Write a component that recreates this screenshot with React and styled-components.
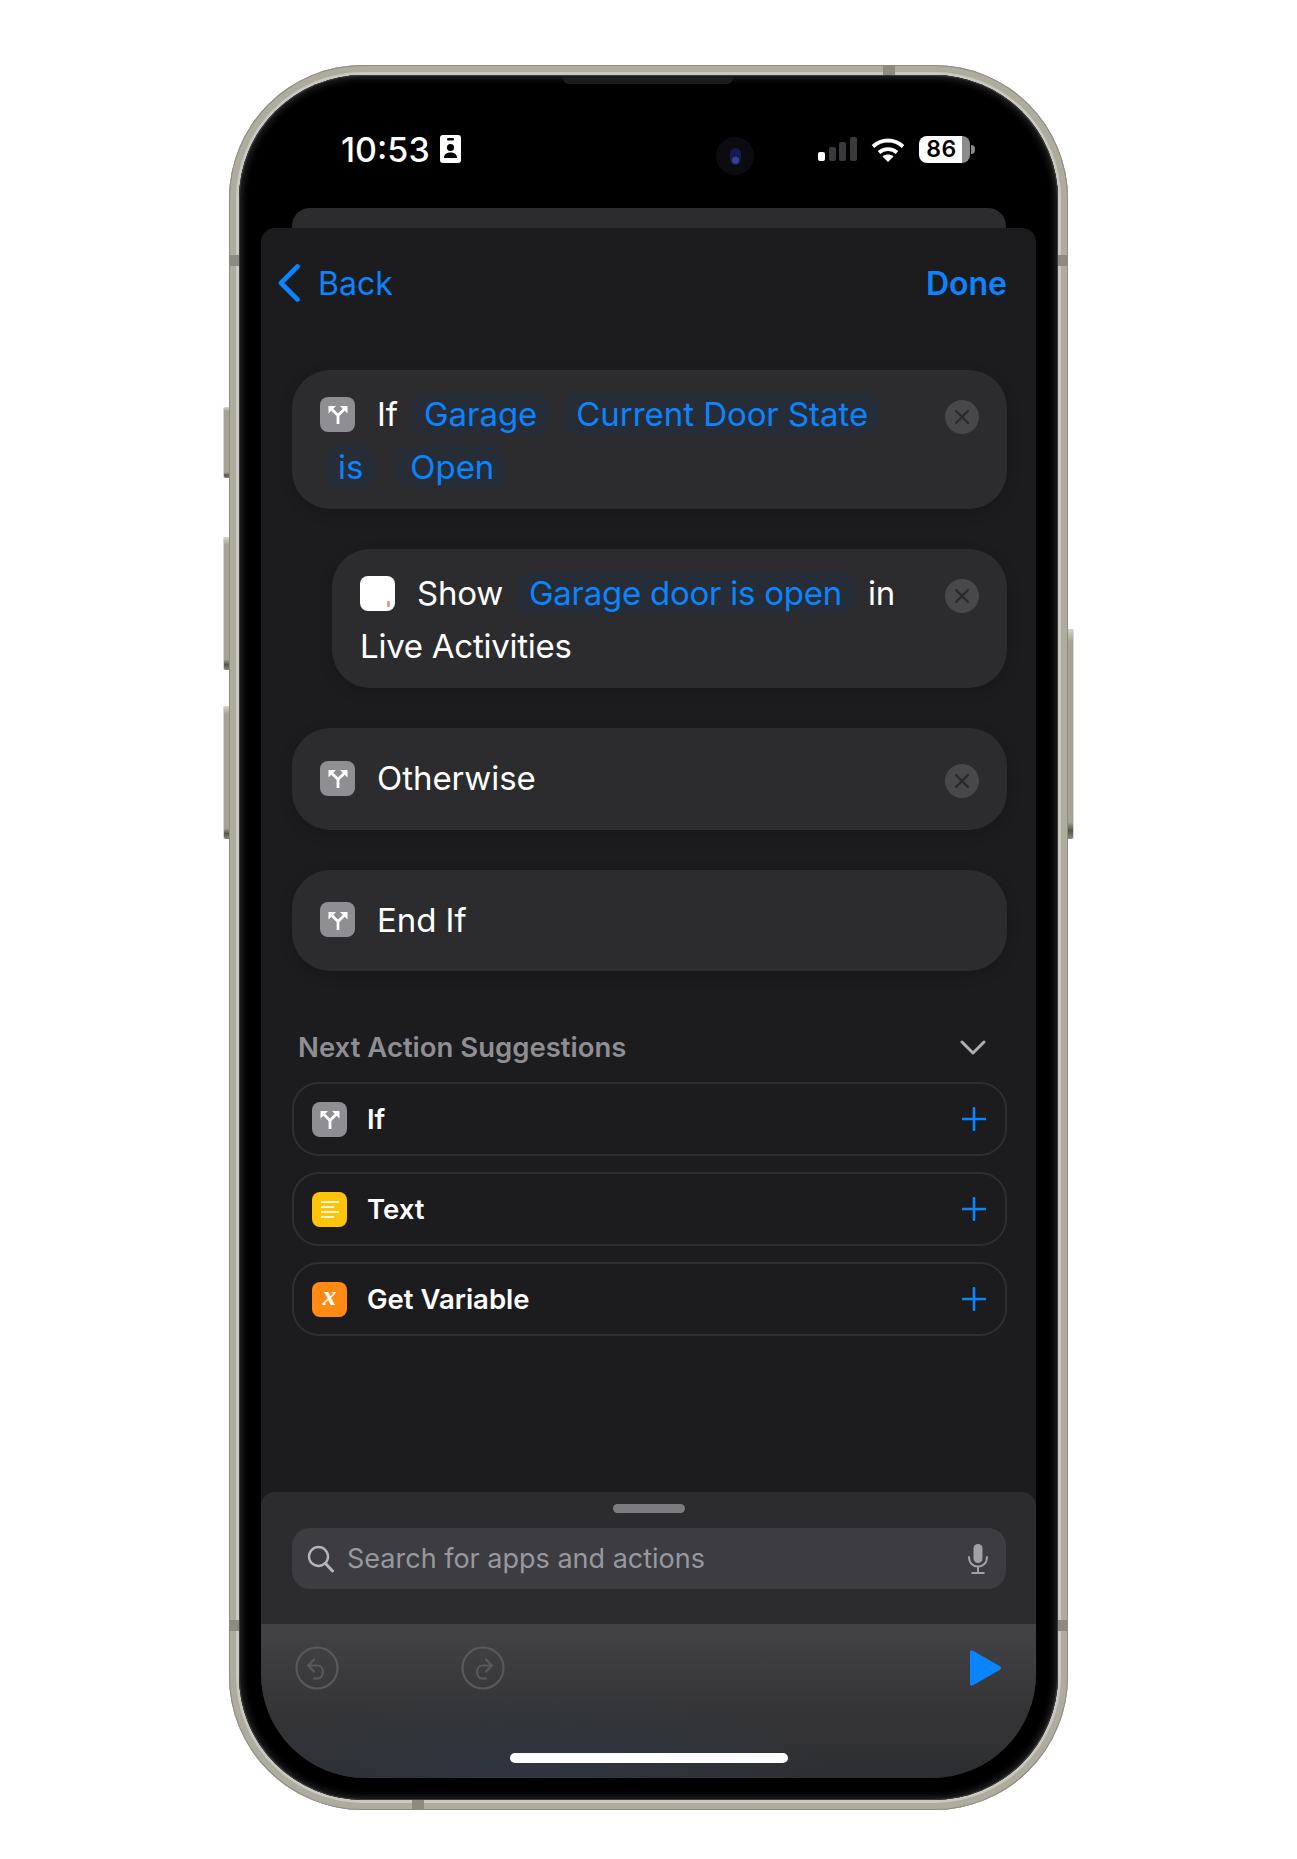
import React from "react"
import styled, { createGlobalStyle } from "styled-components"

const blue = "#0a84ff"

const GlobalStyle = createGlobalStyle`
  html, body {
    margin: 0;
    background: #fff;
    font-family: Inter, "Noto Sans", sans-serif;
    -webkit-font-smoothing: antialiased;
  }
`

const Stage = styled.div`
  display: flex;
  justify-content: center;
  height: 1859px;
  padding-top: 65px;
  box-sizing: border-box;
`
const Phone = styled.div`
  position: relative;
  display: flex;
  width: 839px;
  height: 1745px;
  padding: 10px;
  box-sizing: border-box;
  border-radius: 134px;
  background: linear-gradient(90deg, #a9a799 0%, #b5b3a6 50%, #a9a799 100%);
  box-shadow: inset 0 0 0 1px #8f8d80, inset 0 0 0 7px #aeac9f, inset 0 0 0 10px #c9c9c0;
`
const SideButton = styled.span`
  position: absolute;
  top: ${p => p.$top}px;
  height: ${p => p.$height}px;
  width: 6px;
  box-sizing: border-box;
  ${p => (p.$right ? "right: -6px; border-right: 1px solid #d8d8d2;" : "left: -6px; border-left: 1px solid #d8d8d2;")}
  background: linear-gradient(180deg, #d4d3ca 0%, #a5a395 6%, #a5a395 92%, #55544c 96%, #8b8a7e 100%);
  border-radius: ${p => (p.$right ? "0 2px 2px 0" : "2px 0 0 2px")};
`
const AntennaV = styled.span`
  position: absolute;
  top: ${p => p.$top}px;
  ${p => (p.$right ? "right: 0;" : "left: 0;")}
  width: 10px;
  height: 11px;
  background: #8d8b80;
`
const AntennaH = styled.span`
  position: absolute;
  left: ${p => p.$left}px;
  ${p => (p.$bottom ? "bottom: 0;" : "top: 0;")}
  width: 12px;
  height: 10px;
  background: #8d8b80;
`
const Screen = styled.div`
  position: relative;
  flex: 1;
  display: flex;
  flex-direction: column;
  padding: 0 22px 22px;
  border-radius: 124px;
  background: #000;
  box-shadow: inset 0 0 0 1px #3a3a3a, inset 0 0 7px 3px #262626;
`
const Speaker = styled.span`
  position: absolute;
  top: 2px;
  left: 324px;
  width: 170px;
  height: 7px;
  border-radius: 0 0 6px 6px;
  background: #1c1c1c;
`
const Camera = styled.span`
  position: absolute;
  top: 62px;
  left: 477px;
  width: 38px;
  height: 38px;
  display: flex;
  align-items: center;
  justify-content: center;
  border-radius: 50%;
  background: #0b0b10;
`
const Lens = styled.span`
  width: 11px;
  height: 17px;
  border-radius: 6px;
  background: radial-gradient(circle at 50% 72%, #3b3f9a 0 3px, #141c50 4px, #141c50 100%);
`
const StatusBar = styled.div`
  height: 133px;
  display: flex;
  align-items: flex-start;
  padding: 57px 66px 0 80px;
  box-sizing: border-box;
`
const Clock = styled.div`
  display: flex;
  align-items: center;
  gap: 10px;
  height: 34px;
  color: #fff;
  font-size: 34px;
  font-weight: 500;
`
const StatusRight = styled.div`
  margin-left: auto;
  display: flex;
  align-items: center;
  height: 34px;
  gap: 14px;
`
const Battery = styled.div`
  position: relative;
  display: flex;
  align-items: center;
  justify-content: center;
  width: 51px;
  height: 27px;
  border-radius: 8px;
  background: linear-gradient(90deg, #fff 0 84%, #8b8b8b 84% 100%);
  color: #000;
  font-size: 23px;
  font-weight: 600;
  letter-spacing: 0.6px;
  padding-right: 6px;
  box-sizing: border-box;
  &::after {
    content: "";
    position: absolute;
    right: -5px;
    top: 9px;
    width: 4px;
    height: 9px;
    border-radius: 0 4px 4px 0;
    background: #8b8b8b;
  }
`
const BackSheet = styled.div`
  height: 20px;
  margin: 0 30px 0 31px;
  border-radius: 18px 18px 0 0;
  background: #2c2c2e;
`
const Sheet = styled.div`
  flex: 1;
  display: flex;
  flex-direction: column;
  overflow: hidden;
  background: #1c1c1e;
  border-radius: 14px 14px 104px 104px;
`
const NavBar = styled.div`
  height: 142px;
  box-sizing: border-box;
  padding: 36px 29px 0 17px;
  display: flex;
  align-items: flex-start;
  justify-content: space-between;
  color: ${blue};
  font-size: 32px;
`
const BackLink = styled.div`
  display: flex;
  align-items: center;
  gap: 18px;
  height: 38px;
`
const DoneLink = styled.div`
  height: 40px;
  line-height: 40px;
  font-weight: 600;
`
const Content = styled.div`
  flex: 1;
  padding: 0 29px 0 31px;
  display: flex;
  flex-direction: column;
`
const Blocks = styled.div`
  display: flex;
  flex-direction: column;
  gap: 40px;
`
const Card = styled.div`
  display: flex;
  justify-content: space-between;
  align-items: flex-start;
  margin-left: ${p => (p.$nested ? "40px" : "0")};
  padding: ${p => (p.$single ? "29px 28px 30px" : "23px 28px 21px")};
  padding-left: 28px;
  min-height: ${p => (p.$single ? "101.5px" : "139px")};
  box-sizing: border-box;
  border-radius: 38px;
  background: #2c2c2e;
  box-shadow: 0 4px 14px rgba(0, 0, 0, 0.16);
`
const Lines = styled.div`
  display: flex;
  flex-direction: column;
  gap: 11px;
`
const Line = styled.div`
  display: flex;
  align-items: center;
  height: 42px;
  gap: ${p => p.$gap || 13}px;
  padding-left: ${p => p.$indent || 0}px;
  color: #fff;
  font-size: 33px;
  letter-spacing: ${p => (p.$tight ? "-0.25px" : "-0.05px")};
  white-space: nowrap;
`
const Word = styled.span`
  margin-left: ${p => p.$left || 0}px;
`
const Pill = styled.span`
  display: inline-flex;
  align-items: center;
  height: 42px;
  padding: 0 13px;
  border-radius: 15px;
  background: #272d36;
  color: ${blue};
`
const Tile = styled.span`
  width: 35px;
  height: 35px;
  flex: none;
  display: flex;
  align-items: center;
  justify-content: center;
  border-radius: 8px;
  background: ${p => p.$bg};
`
const VariableGlyph = styled.span`
  color: #fff;
  font-family: "Liberation Serif", serif;
  font-size: 27px;
  font-style: italic;
  font-weight: 700;
  line-height: 1;
  margin-top: -5px;
`
const CloseDot = styled.span`
  width: 34px;
  height: 34px;
  flex: none;
  margin-top: 7px;
  display: flex;
  align-items: center;
  justify-content: center;
  border-radius: 50%;
  background: #48484a;
`
const SectionHead = styled.div`
  margin-top: 55px;
  height: 42px;
  padding: 0 20px 0 6px;
  display: flex;
  align-items: center;
  justify-content: space-between;
  color: #8e8e93;
  font-size: 27.5px;
  font-weight: 600;
`
const Suggestions = styled.div`
  margin-top: 14px;
  display: flex;
  flex-direction: column;
  gap: 16px;
`
const Row = styled.div`
  height: 74px;
  box-sizing: border-box;
  padding: 0 19px 0 18px;
  display: flex;
  align-items: center;
  gap: 20px;
  border: 2px solid #2f2f31;
  border-radius: 27px;
  color: #fff;
  font-size: 27.5px;
  font-weight: 600;
`
const RowPlus = styled.svg`
  margin-left: auto;
`
const SearchPanel = styled.div`
  height: 132px;
  box-sizing: border-box;
  padding: 12px 30px 0 31px;
  background: #2c2c2e;
  border-radius: 14px 14px 0 0;
`
const Handle = styled.div`
  width: 72px;
  height: 9px;
  margin: 0 auto 15px;
  border-radius: 5px;
  background: #7c7c80;
`
const SearchField = styled.div`
  height: 61px;
  padding: 0 18px 0 15px;
  display: flex;
  align-items: center;
  gap: 13px;
  border-radius: 18px;
  background: #3c3c41;
  color: #98989f;
  font-size: 27px;
`
const MicIcon = styled.svg`
  margin-left: auto;
`
const Toolbar = styled.div`
  height: 154px;
  box-sizing: border-box;
  padding: 22px 34px 0 34px;
  display: flex;
  flex-direction: column;
  background:
    radial-gradient(ellipse 300px 90px at 35% 100%, rgba(46, 56, 70, 0.75), transparent),
    linear-gradient(180deg, #434345 0%, #343436 60%, #2d2e31 100%);
`
const ToolRow = styled.div`
  display: flex;
  align-items: center;
  gap: 122px;
`
const PlayIcon = styled.svg`
  margin-left: auto;
`
const HomeBar = styled.div`
  width: 278px;
  height: 10px;
  margin: 63px auto 0;
  border-radius: 5px;
  background: #fff;
`

const ForkIcon = () => (
  <svg width="22" height="22" viewBox="0 0 22 22" fill="none">
    <path d="M11 21V12.500L5 6.500M11 12.500L17 6.500" stroke="#fff" strokeWidth="2.800" />
    <path d="M1.500 3H9L1.500 10.500z" fill="#fff" />
    <path d="M20.500 3H13L20.500 10.500z" fill="#fff" />
  </svg>
)

const CloseX = () => (
  <svg width="16" height="16" viewBox="0 0 16 16">
    <path d="M2 2l12 12M14 2L2 14" stroke="#2a2a2c" strokeWidth="2.400" strokeLinecap="round" />
  </svg>
)

const Plus = () => (
  <RowPlus width="24" height="24" viewBox="0 0 24 24">
    <path d="M12 1v22M1 12h22" stroke={blue} strokeWidth="2.600" strokeLinecap="round" />
  </RowPlus>
)

const TextLines = () => (
  <svg width="20" height="20" viewBox="0 0 20 20">
    <path d="M1 3h18M1 8h13M1 13h18M1 18h13" stroke="#fff" strokeOpacity="0.85" strokeWidth="2" />
  </svg>
)

const suggestions = [
  { label: "If", bg: "#8e8e93", icon: <ForkIcon /> },
  { label: "Text", bg: "#ffc40a", icon: <TextLines /> },
  { label: "Get Variable", bg: "#ff8a14", icon: <VariableGlyph>x</VariableGlyph> },
]

const App = () => (
  <Stage>
    <GlobalStyle />
    <Phone>
      <SideButton $top={342} $height={71} />
      <SideButton $top={472} $height={133} />
      <SideButton $top={641} $height={133} />
      <SideButton $right $top={564} $height={210} />
      <AntennaV $top={190} />
      <AntennaV $right $top={190} />
      <AntennaV $top={1555} />
      <AntennaV $right $top={1555} />
      <AntennaH $left={654} />
      <AntennaH $bottom $left={183} />
      <Screen>
        <Speaker />
        <Camera>
          <Lens />
        </Camera>
        <StatusBar>
          <Clock>
            10:53
            <svg width="21" height="28" viewBox="0 0 21 28">
              <rect width="21" height="28" rx="3" fill="#fff" />
              <rect x="7" y="3" width="7" height="2.500" rx="1.200" fill="#000" />
              <circle cx="10.500" cy="12.500" r="3.600" fill="#000" />
              <path d="M4 23c0-4 3-5.500 6.500-5.500S17 19 17 23z" fill="#000" />
            </svg>
          </Clock>
          <StatusRight>
            <svg width="39" height="24" viewBox="0 0 39 24">
              <rect x="0" y="15" width="7" height="9" rx="2" fill="#fff" />
              <rect x="11" y="10" width="7" height="14" rx="2" fill="#3a3a3c" />
              <rect x="21" y="5" width="7" height="19" rx="2" fill="#3a3a3c" />
              <rect x="32" y="0" width="7" height="24" rx="2" fill="#3a3a3c" />
            </svg>
            <svg width="34" height="25" viewBox="0 0 34 25" fill="none">
              <path d="M2 9.500c8.500-8 21.500-8 30 0" stroke="#fff" strokeWidth="3.800" />
              <path d="M8 15.500c5-4.600 13-4.600 18 0" stroke="#fff" strokeWidth="3.800" />
              <path d="M17 25l-5.500-5.500c3-2.600 8-2.600 11 0z" fill="#fff" />
            </svg>
            <Battery>86</Battery>
          </StatusRight>
        </StatusBar>
        <BackSheet />
        <Sheet>
          <NavBar>
            <BackLink>
              <svg width="22" height="38" viewBox="0 0 22 38" fill="none">
                <path d="M19.500 2.500L3 19l16.500 16.500" stroke={blue} strokeWidth="4.600" strokeLinecap="round" strokeLinejoin="round" />
              </svg>
              Back
            </BackLink>
            <DoneLink>Done</DoneLink>
          </NavBar>
          <Content>
            <Blocks>
              <Card>
                <Lines>
                  <Line>
                    <Tile $bg="#8e8e93">
                      <ForkIcon />
                    </Tile>
                    <Word $left={9}>If</Word>
                    <Pill>Garage</Pill>
                    <Pill>Current Door State</Pill>
                  </Line>
                  <Line $indent={5} $gap={21}>
                    <Pill>is</Pill>
                    <Pill>Open</Pill>
                  </Line>
                </Lines>
                <CloseDot>
                  <CloseX />
                </CloseDot>
              </Card>
              <Card $nested>
                <Lines>
                  <Line $tight>
                    <Tile $bg="#fff">
                      <svg width="35" height="35" viewBox="0 0 35 35">
                        <rect x="27" y="25" width="3" height="6" rx="1" fill="#e2998f" />
                      </svg>
                    </Tile>
                    <Word $left={9}>Show</Word>
                    <Pill>Garage door is open</Pill>
                    <Word>in</Word>
                  </Line>
                  <Line $tight>Live Activities</Line>
                </Lines>
                <CloseDot>
                  <CloseX />
                </CloseDot>
              </Card>
              <Card $single>
                <Line>
                  <Tile $bg="#8e8e93">
                    <ForkIcon />
                  </Tile>
                  <Word $left={9}>Otherwise</Word>
                </Line>
                <CloseDot>
                  <CloseX />
                </CloseDot>
              </Card>
              <Card $single>
                <Line>
                  <Tile $bg="#8e8e93">
                    <ForkIcon />
                  </Tile>
                  <Word $left={9}>End If</Word>
                </Line>
              </Card>
            </Blocks>
            <SectionHead>
              Next Action Suggestions
              <svg width="28" height="16" viewBox="0 0 28 16" fill="none">
                <path d="M3 3l11 11L25 3" stroke="#aeaeb2" strokeWidth="3" strokeLinecap="round" strokeLinejoin="round" />
              </svg>
            </SectionHead>
            <Suggestions>
              {suggestions.map(item => (
                <Row key={item.label}>
                  <Tile $bg={item.bg}>{item.icon}</Tile>
                  {item.label}
                  <Plus />
                </Row>
              ))}
            </Suggestions>
          </Content>
          <SearchPanel>
            <Handle />
            <SearchField>
              <svg width="27" height="28" viewBox="0 0 27 28" fill="none">
                <circle cx="11.500" cy="11.500" r="9.500" stroke="#b4b4b9" strokeWidth="2.400" />
                <path d="M18.500 18.500L25.500 26" stroke="#b4b4b9" strokeWidth="3" strokeLinecap="round" />
              </svg>
              Search for apps and actions
              <MicIcon width="20" height="30" viewBox="0 0 20 30" fill="none">
                <rect x="5.500" y="0" width="9" height="19" rx="4.500" fill="#a0a0a6" />
                <path d="M1 13c0 6 4 9.500 9 9.500s9-3.500 9-9.500" stroke="#a0a0a6" strokeWidth="2" strokeLinecap="round" />
                <path d="M10 22.500V28M3.500 29h13" stroke="#a0a0a6" strokeWidth="2" />
              </MicIcon>
            </SearchField>
          </SearchPanel>
          <Toolbar>
            <ToolRow>
              <svg width="44" height="44" viewBox="0 0 44 44" fill="none">
                <circle cx="22" cy="22" r="20.500" stroke="#59595b" strokeWidth="2.200" />
                <path d="M19 13.500l-6 6 6 6M13 19.500h10c6.500 0 6.500 13 0 13h-4" stroke="#59595b" strokeWidth="2.200" strokeLinecap="round" strokeLinejoin="round" />
              </svg>
              <svg width="44" height="44" viewBox="0 0 44 44" fill="none">
                <circle cx="22" cy="22" r="20.500" stroke="#59595b" strokeWidth="2.200" />
                <path d="M25 13.500l6 6-6 6M31 19.500H21c-6.500 0-6.500 13 0 13h4" stroke="#59595b" strokeWidth="2.200" strokeLinecap="round" strokeLinejoin="round" />
              </svg>
              <PlayIcon width="34" height="38" viewBox="0 0 34 38">
                <path d="M2 3.500C2 1.500 3.500.8 5 1.700l27 15.500c1.400.9 1.400 2.700 0 3.600L5 36.300c-1.500.9-3 .2-3-1.800z" fill={blue} />
              </PlayIcon>
            </ToolRow>
            <HomeBar />
          </Toolbar>
        </Sheet>
      </Screen>
    </Phone>
  </Stage>
)

export default App
